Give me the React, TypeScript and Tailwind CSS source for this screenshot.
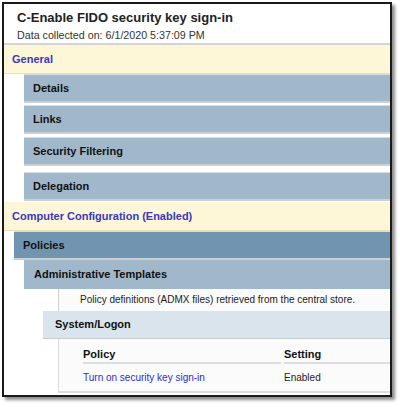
const rows = [
  { label: "Details", gap: "mt-0" },
  { label: "Links", gap: "mt-[2px]" },
  { label: "Security Filtering", gap: "mt-[3px]" },
  { label: "Delegation", gap: "mt-[6px]" },
];

const Band = ({ children }: { children: React.ReactNode }) => (
  <div className="flex h-[29px] items-center border-b border-[#e8dfb8] bg-[#fdf6d7] pl-[8px] text-[11px] font-bold text-[#3a37c4]">
    {children}
  </div>
);

const Row = ({ label, cls }: { label: string; cls: string }) => (
  <div
    className={`${cls} flex h-[29px] items-center border-b-2 border-t border-b-[#c9d0d6] border-t-[#d7dde2] pl-[9px] text-[11px] font-bold text-[#111]`}>
    {label}
  </div>
);

export default function App() {
  return (
    <div className="h-[407px] w-[400px] bg-white font-['Liberation_Sans',Arial,sans-serif]">
      <div className="ml-[2px] mt-[2px] h-[395px] w-[390px] overflow-hidden border-2 border-[#1a1a1a] bg-white shadow-[3px_3px_3px_rgba(0,0,0,0.45)]">
        <div className="h-[41px] border-b-2 border-[#d4d4d4] pl-[13px] pt-[5px]">
          <h1 className="text-[13px] font-bold leading-[18px] text-[#222]">
            C-Enable FIDO security key sign-in
          </h1>
          <p className="mt-[2px] text-[10.7px] leading-[13px] text-[#333]">
            Data collected on: 6/1/2020 5:37:09 PM
          </p>
        </div>

        <Band>General</Band>

        <div className="flex flex-col">
          {rows.map((r) => (
            <Row key={r.label} label={r.label} cls={`${r.gap} ml-[20px] bg-[#a1b8ca]`} />
          ))}
        </div>

        <div className="mt-[1px]">
          <Band>Computer Configuration (Enabled)</Band>
        </div>

        <Row label="Policies" cls="ml-[10px] bg-[#7195b0]" />
        <div className="ml-[20px] flex h-[29px] items-center bg-[#a1b8ca] pl-[10px] text-[11px] font-bold text-[#111]">
          Administrative Templates
        </div>

        <div className="ml-[54px] h-[22px] border-l border-[#cfcfcf] bg-[#fbfbfb] pl-[21px] pt-[4px] text-[10px] leading-[14px] text-[#222]">
          Policy definitions (ADMX files) retrieved from the central store.
        </div>

        <div className="ml-[39px] flex h-[28px] items-center border-b border-[#c5ccd2] bg-[#dae4ec] pl-[12px] text-[11px] font-bold text-[#111]">
          System/Logon
        </div>

        <div className="ml-[54px] h-[54px] border-b-2 border-l border-[#dcdcdc] bg-[#fbfbfb] pl-[24px] pt-[8px]">
          <div className="grid grid-cols-[198px_1fr] gap-x-[3px] text-[11px] font-bold leading-[14px] text-[#111]">
            <div className="border-b-2 border-[#dedede] pb-[1px]">Policy</div>
            <div className="border-b-2 border-[#dedede] pb-[1px]">Setting</div>
          </div>
          <div className="mt-[7px] grid grid-cols-[198px_1fr] gap-x-[3px] text-[10px] leading-[14px] text-[#222]">
            <div className="text-[#2b2bd8]">Turn on security key sign-in</div>
            <div>Enabled</div>
          </div>
        </div>
      </div>
    </div>
  );
}
